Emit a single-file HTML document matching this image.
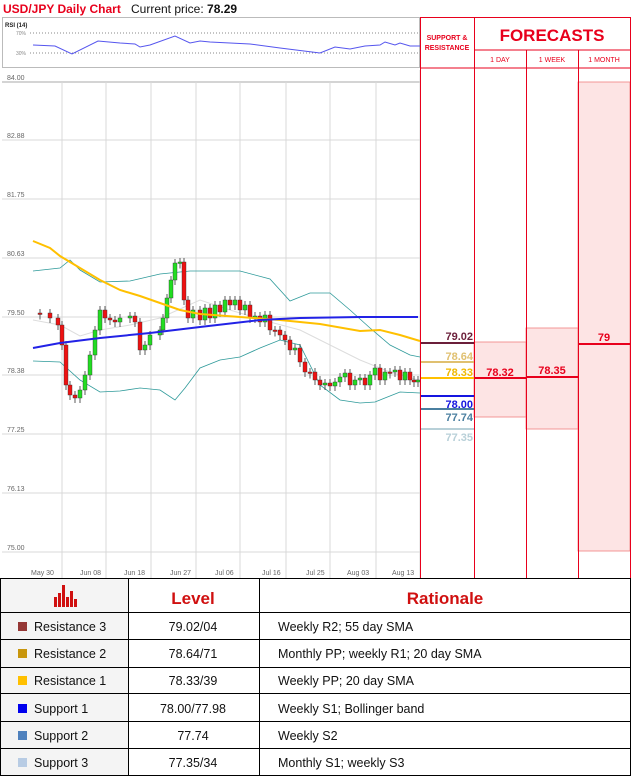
<!DOCTYPE html>
<html><head><meta charset="utf-8"><style>
body{margin:0;width:631px;height:777px;background:#fff;overflow:hidden;font-family:"Liberation Sans",sans-serif}
svg{position:absolute;left:0;top:0}
</style></head><body>
<svg width="631" height="777" viewBox="0 0 631 777" xmlns="http://www.w3.org/2000/svg" font-family="Liberation Sans, sans-serif">
<text x="3" y="13" font-size="12" font-weight="bold" fill="#e8001c">USD/JPY Daily Chart</text>
<text x="131" y="13" font-size="12" fill="#111">Current price: <tspan font-weight="bold">78.29</tspan></text>
<!-- RSI -->
<rect x="2.5" y="17.5" width="417" height="50" fill="#fff" stroke="#bbb"/>
<text x="5" y="27" font-size="6" font-weight="bold" fill="#222">RSI (14)</text>
<text x="16" y="35" font-size="5" fill="#888">70%</text><text x="16" y="55" font-size="5" fill="#888">30%</text>
<line x1="30" y1="33" x2="419" y2="33" stroke="#888" stroke-dasharray="1,2"/>
<line x1="30" y1="53" x2="419" y2="53" stroke="#888" stroke-dasharray="1,2"/>
<polyline fill="none" stroke="#5555ee" stroke-width="1" points="33,45 55,46 72,54 98,41 120,43 135,44 140,47 150,45 175,36 190,43 200,41 210,42 250,44 280,48 320,53 335,47 350,49 365,46 380,45 385,42 395,45 400,43 410,46 420,46"/>
<!-- chart -->
<rect x="2" y="70" width="418" height="508" fill="#fff"/>
<g stroke="#d8d8d8" stroke-width="1">
<line x1="2" y1="82" x2="420" y2="82" stroke="#aaa"/><line x1="2" y1="140" x2="420" y2="140"/><line x1="2" y1="199" x2="420" y2="199"/><line x1="2" y1="258" x2="420" y2="258"/><line x1="2" y1="317" x2="420" y2="317"/><line x1="2" y1="375" x2="420" y2="375"/><line x1="2" y1="434" x2="420" y2="434"/><line x1="2" y1="493" x2="420" y2="493"/><line x1="2" y1="552" x2="420" y2="552"/>
<line x1="62" y1="82" x2="62" y2="578"/><line x1="106" y1="82" x2="106" y2="578"/><line x1="151" y1="82" x2="151" y2="578"/><line x1="196" y1="82" x2="196" y2="578"/><line x1="240" y1="82" x2="240" y2="578"/><line x1="286" y1="82" x2="286" y2="578"/><line x1="330" y1="82" x2="330" y2="578"/><line x1="376" y1="82" x2="376" y2="578"/><line x1="420" y1="70" x2="420" y2="578"/>
</g>
<g font-size="7" fill="#666">
<text x="7" y="80">84.00</text><text x="7" y="138">82.88</text><text x="7" y="197">81.75</text><text x="7" y="256">80.63</text><text x="7" y="315">79.50</text><text x="7" y="373">78.38</text><text x="7" y="432">77.25</text><text x="7" y="491">76.13</text><text x="7" y="550">75.00</text>
<text x="31" y="575">May 30</text><text x="80" y="575">Jun 08</text><text x="124" y="575">Jun 18</text><text x="170" y="575">Jun 27</text><text x="215" y="575">Jul 06</text><text x="262" y="575">Jul 16</text><text x="306" y="575">Jul 25</text><text x="347" y="575">Aug 03</text><text x="392" y="575">Aug 13</text>
</g>
<polyline fill="none" stroke="#ddd" stroke-width="1" points="33,320 60,325 80,336 100,330 130,325 160,318 200,300 230,310 270,322 300,330 330,345 360,360 390,372 418,380"/>
<polyline fill="none" stroke="#2e9a9a" stroke-width="0.8" points="33,271 60,268 70,260 80,270 100,282 130,281 160,274 190,271 240,271 270,279 290,301 310,293 330,293 350,310 370,328 390,345 410,355 420,357"/>
<polyline fill="none" stroke="#2e9a9a" stroke-width="0.8" points="33,361 60,362 80,380 100,392 120,391 140,388 160,390 175,400 185,388 200,368 220,360 240,357 260,348 280,340 300,345 320,385 340,400 360,403 375,402 400,392 420,393"/>
<g id="c"></g>
<polyline fill="none" stroke="#ffc000" stroke-width="2" points="33,241 50,248 60,256 80,268 100,280 120,290 140,296 160,303 180,310 200,314 240,317 280,320 320,324 360,331 380,330 400,335 420,341"/>
<polyline fill="none" stroke="#2222e6" stroke-width="2" points="33,348 60,343 100,338 150,333 200,327 260,320 300,318 360,317 418,317"/>
<!-- right panel -->
<rect x="474" y="342" width="52" height="75" fill="#fde4e4" stroke="#f08080" stroke-width="0.8"/>
<rect x="526" y="328" width="52" height="101" fill="#fde4e4" stroke="#f08080" stroke-width="0.8"/>
<rect x="578" y="82" width="52" height="469" fill="#fde4e4" stroke="#f08080" stroke-width="0.8"/>
<g stroke="#e8001c" stroke-width="1">
<line x1="420" y1="17.5" x2="630" y2="17.5"/><line x1="420.5" y1="17" x2="420.5" y2="578"/><line x1="474.5" y1="17" x2="474.5" y2="578"/><line x1="526.5" y1="50" x2="526.5" y2="578"/><line x1="578.5" y1="50" x2="578.5" y2="578"/><line x1="630.5" y1="17" x2="630.5" y2="578"/>
<line x1="474" y1="50" x2="631" y2="50"/><line x1="420" y1="68" x2="631" y2="68"/>
</g>
<text x="447" y="40" font-size="7" font-weight="bold" fill="#e8001c" text-anchor="middle">SUPPORT &amp;</text>
<text x="447" y="50" font-size="7" font-weight="bold" fill="#e8001c" text-anchor="middle">RESISTANCE</text>
<text x="552" y="41" font-size="17" font-weight="bold" fill="#e8001c" text-anchor="middle">FORECASTS</text>
<g font-size="7" fill="#e8001c" text-anchor="middle"><text x="500" y="62">1 DAY</text><text x="552" y="62">1 WEEK</text><text x="604" y="62">1 MONTH</text></g>
<g stroke-width="2"><line x1="421" y1="343" x2="474" y2="343" stroke="#6b1f3a"/><line x1="421" y1="362" x2="474" y2="362" stroke="#e0c070"/><line x1="421" y1="378" x2="474" y2="378" stroke="#ffc000"/><line x1="421" y1="396" x2="474" y2="396" stroke="#1515e0"/><line x1="421" y1="409" x2="474" y2="409" stroke="#4a7fa0"/><line x1="421" y1="429" x2="474" y2="429" stroke="#b8d0d8"/>
<line x1="474" y1="378" x2="526" y2="378" stroke="#e8001c"/><line x1="526" y1="377" x2="578" y2="377" stroke="#e8001c"/><line x1="578" y1="344" x2="630" y2="344" stroke="#e8001c"/></g>
<g font-size="11" font-weight="bold" text-anchor="end"><text x="473" y="340" fill="#6b1f3a">79.02</text><text x="473" y="360" fill="#e0c070">78.64</text><text x="473" y="376" fill="#f0b800">78.33</text><text x="473" y="408" fill="#1515e0">78.00</text><text x="473" y="421" fill="#4a7fa0">77.74</text><text x="473" y="441" fill="#b8d0d8">77.35</text></g>
<g font-size="11" font-weight="bold" fill="#e8001c" text-anchor="middle"><text x="500" y="376">78.32</text><text x="552" y="374">78.35</text><text x="604" y="341">79</text></g>
<!-- table -->
<rect x="0" y="578" width="631" height="199" fill="#fff"/>
<rect x="1" y="579" width="127" height="197" fill="#f4f4f4"/>
<g stroke="#000" stroke-width="1" fill="none">
<rect x="0.5" y="578.5" width="630" height="197"/>
<line x1="128.5" y1="578" x2="128.5" y2="776"/><line x1="259.5" y1="578" x2="259.5" y2="776"/>
<line x1="0" y1="612.5" x2="631" y2="612.5"/><line x1="0" y1="639.5" x2="631" y2="639.5"/><line x1="0" y1="667.5" x2="631" y2="667.5"/><line x1="0" y1="693.5" x2="631" y2="693.5"/><line x1="0" y1="721.5" x2="631" y2="721.5"/><line x1="0" y1="748.5" x2="631" y2="748.5"/>
</g>
<g fill="#d01010"><rect x="54" y="597" width="3" height="10"/><rect x="58" y="593" width="3" height="14"/><rect x="62" y="585" width="3" height="22"/><rect x="66" y="597" width="3" height="10"/><rect x="70" y="591" width="3" height="16"/><rect x="74" y="599" width="3" height="8"/></g>
<text x="193" y="604" font-size="17" font-weight="bold" fill="#d01010" text-anchor="middle">Level</text>
<text x="445" y="604" font-size="17" font-weight="bold" fill="#d01010" text-anchor="middle">Rationale</text>
<g font-size="12.5" fill="#111">
<rect x="18" y="622" width="9" height="9" fill="#953735"/><text x="34" y="631">Resistance 3</text><text x="193" y="631" text-anchor="middle">79.02/04</text><text x="278" y="631">Weekly R2; 55 day SMA</text>
<rect x="18" y="649" width="9" height="9" fill="#c8960c"/><text x="34" y="658">Resistance 2</text><text x="193" y="658" text-anchor="middle">78.64/71</text><text x="278" y="658">Monthly PP; weekly R1; 20 day SMA</text>
<rect x="18" y="676" width="9" height="9" fill="#ffc000"/><text x="34" y="685">Resistance 1</text><text x="193" y="685" text-anchor="middle">78.33/39</text><text x="278" y="685">Weekly PP; 20 day SMA</text>
<rect x="18" y="704" width="9" height="9" fill="#0000ee"/><text x="34" y="713">Support 1</text><text x="193" y="713" text-anchor="middle">78.00/77.98</text><text x="278" y="713">Weekly S1; Bollinger band</text>
<rect x="18" y="731" width="9" height="9" fill="#4f81bd"/><text x="34" y="740">Support 2</text><text x="193" y="740" text-anchor="middle">77.74</text><text x="278" y="740">Weekly S2</text>
<rect x="18" y="758" width="9" height="9" fill="#b8cce4"/><text x="34" y="767">Support 3</text><text x="193" y="767" text-anchor="middle">77.35/34</text><text x="278" y="767">Monthly S1; weekly S3</text>
</g>
</svg>
<script>
var pts=[[33,313],[40,313],[50,318],[58,325],[62,345],[66,385],[70,395],[75,398],[80,390],[85,375],[90,355],[95,330],[100,310],[105,318],[110,320],[115,322],[120,318],[130,316],[135,322],[140,350],[145,345],[150,335],[160,330],[163,318],[167,298],[171,280],[175,263],[180,262],[184,300],[188,318],[193,310],[200,320],[205,308],[210,318],[215,305],[220,312],[225,300],[230,305],[235,300],[240,310],[245,305],[250,318],[255,316],[260,322],[265,315],[270,330],[275,330],[280,335],[285,340],[290,350],[295,348],[300,362],[305,372],[310,372],[315,380],[320,385],[325,383],[330,386],[335,382],[340,377],[345,373],[350,385],[355,380],[360,378],[365,385],[370,375],[375,368],[380,380],[385,372],[390,372],[395,370],[400,380],[405,372],[410,380],[414,382],[418,380]];
var s='',p=pts[0][1];
for(var i=1;i<pts.length;i++){var x=pts[i][0],c=pts[i][1],o=p,up=c<o,t=Math.min(o,c),b=Math.max(o,c);if(b-t<1.5){b=t+1.5;}
s+='<line x1="'+(x)+'" y1="'+(t-4)+'" x2="'+x+'" y2="'+(b+5)+'" stroke="#333" stroke-width="0.8"/>';
s+='<rect x="'+(x-2)+'" y="'+t+'" width="4" height="'+(b-t)+'" fill="'+(up?'#22dd22':'#ee1111')+'" stroke="#333" stroke-width="0.4"/>';p=c;}
document.getElementById('c').innerHTML=s;
</script>
</body></html>
